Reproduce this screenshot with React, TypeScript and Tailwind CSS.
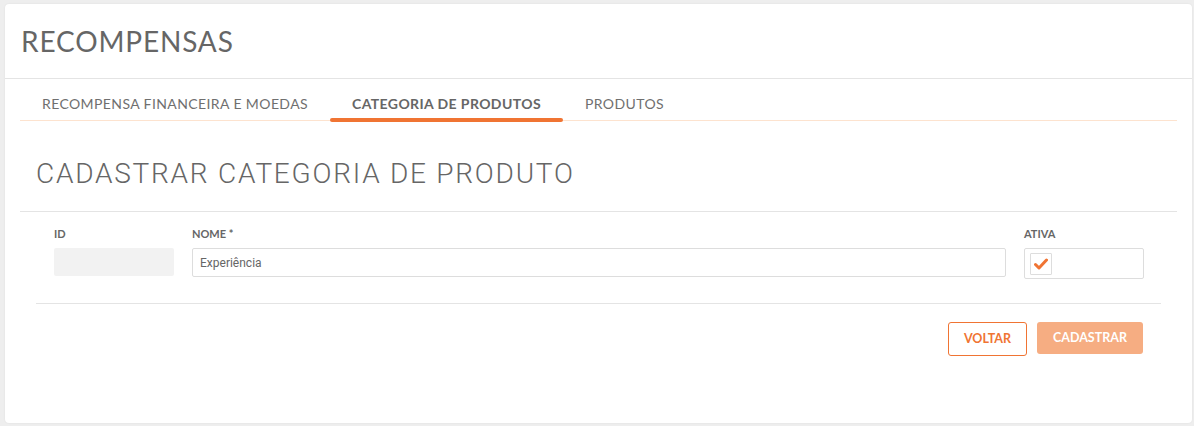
import React, { useState } from 'react';

const tabs = ['RECOMPENSA FINANCEIRA E MOEDAS', 'CATEGORIA DE PRODUTOS', 'PRODUTOS'];

const App: React.FC = () => {
  const [activeTab, setActiveTab] = useState<number>(1);
  const [nome, setNome] = useState<string>('Experiência');
  const [ativa, setAtiva] = useState<boolean>(true);

  return (
    <div className="min-h-[426px] w-full bg-[#eeeeee] pt-[4px] pl-[5px] pr-[2px] pb-[3px] font-['Lato',sans-serif]">
      <div className="h-[419px] rounded-[4px] bg-white shadow-[0_0_2px_rgba(0,0,0,0.08)]">
        {/* Page header */}
        <div className="flex h-[75px] items-center border-b border-[#e4e4e4] pl-[16px]">
          <h1 className="text-[28px] font-normal tracking-[0.85px] text-[#666666]">RECOMPENSAS</h1>
        </div>

        {/* Tabs */}
        <div className="px-[15px]">
          <div className="flex h-[42px] items-end border-b border-[#fde3cf]">
            {tabs.map((tab, i) => (
              <button
                key={tab}
                onClick={() => setActiveTab(i)}
                className={`relative flex h-full items-center px-[22px] pt-[7px] text-[14px] tracking-[0.4px] ${
                  activeTab === i ? 'font-bold text-[#666666]' : 'font-normal text-[#6f6f6f]'
                }`}
              >
                {tab}
                {activeTab === i && (
                  <span className="absolute right-0 bottom-[-2px] left-0 h-[4px] rounded-full bg-[#f07433]" />
                )}
              </button>
            ))}
          </div>

          {/* Form title */}
          <div className="flex h-[91px] items-center border-b border-[#e4e4e4] pt-[15px] pl-[16px]">
            <h2 className="font-['Roboto',sans-serif] text-[28px] font-light tracking-[1.75px] text-[#666666]">
              CADASTRAR CATEGORIA DE PRODUTO
            </h2>
          </div>

          <div className="px-[16px]">
            <div className="flex gap-[18px] border-b border-[#e4e4e4] pt-[14px] pb-[24px] pl-[18px]">
              <div className="flex w-[120px] flex-col">
                <label className="mb-[8px] h-[14px] text-[11px] font-bold text-[#666666]">ID</label>
                <div className="h-[28px] rounded-[2px] bg-[#f2f2f2]" />
              </div>
              <div className="flex w-[814px] flex-col">
                <label className="mb-[8px] h-[14px] text-[11px] font-bold text-[#666666]">NOME *</label>
                <input
                  value={nome}
                  onChange={(e) => setNome(e.target.value)}
                  className="h-[29px] rounded-[2px] border border-[#dddddd] px-[7px] font-['Roboto',sans-serif] text-[12px] text-[#666666] outline-none"
                />
              </div>
              <div className="flex w-[120px] flex-col">
                <label className="mb-[8px] h-[14px] text-[11px] font-bold text-[#666666]">ATIVA</label>
                <div className="flex h-[31px] items-center rounded-[2px] border border-[#dddddd] pl-[5px]">
                  <button
                    onClick={() => setAtiva(!ativa)}
                    className="flex h-[22px] w-[22px] items-center justify-center rounded-[1px] border border-[#dddddd] bg-white"
                  >
                    {ativa && (
                      <svg width="14" height="12" viewBox="0 0 14 12">
                        <path d="M1.5 6.5 L5 10 L12.5 2" fill="none" stroke="#f07433" strokeWidth="3" strokeLinecap="round" strokeLinejoin="round" />
                      </svg>
                    )}
                  </button>
                </div>
              </div>
            </div>

            {/* Actions */}
            <div className="flex justify-end gap-[10px] pt-[18px] pr-[18px]">
              <button className="h-[34px] w-[79px] rounded-[3px] border border-[#f07433] bg-white text-[12.5px] font-bold text-[#f07433]">
                VOLTAR
              </button>
              <button className="h-[32px] w-[106px] rounded-[3px] bg-[#f6ad82] text-[12.5px] font-bold text-white">
                CADASTRAR
              </button>
            </div>
          </div>
        </div>
      </div>
    </div>
  );
};

export default App;
